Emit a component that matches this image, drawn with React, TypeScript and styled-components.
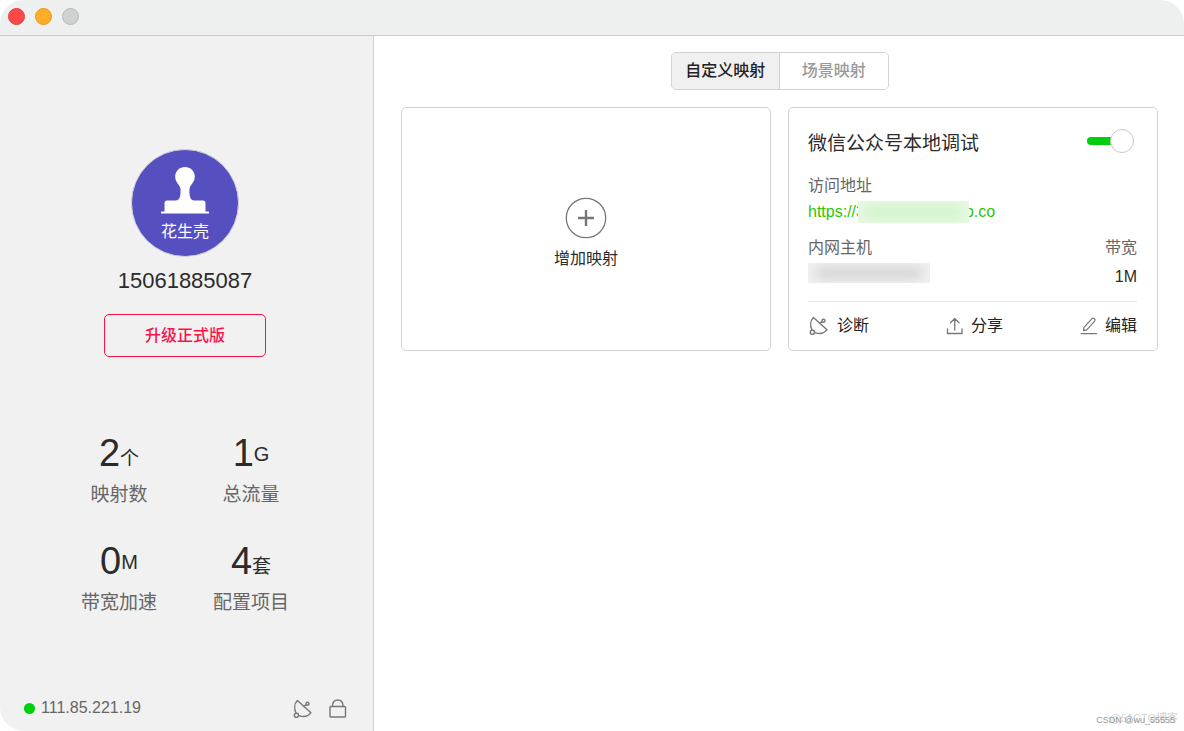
import React from 'react';
import styled, { createGlobalStyle } from 'styled-components';

const Global = createGlobalStyle`
  *, *::before, *::after { box-sizing: border-box; }
  body {
    margin: 0;
    background: #fff;
    color: #2b2b2b;
    font-family: "Liberation Sans", "Noto Sans CJK SC", sans-serif;
    font-size: 16px;
    line-height: 24px;
  }
  button { font: inherit; color: inherit; background: none; border: 0; padding: 0; cursor: pointer; }
  h1, h2, p, dl, dt, dd { margin: 0; font-weight: 400; }
  svg { display: block; }
`;

const Window = styled.div`
  position: relative;
  display: flex;
  flex-direction: column;
  min-height: 100vh;
  border-radius: 24px;
  overflow: hidden;
`;

const TitleBar = styled.header`
  display: flex;
  align-items: center;
  gap: 10px;
  height: 36px;
  padding: 0 8px 3px;
  background: #edf0ef;
  border-bottom: 1px solid #c9cccb;
`;

const Light = styled.button<{ $fill: string; $edge: string }>`
  width: 17px;
  height: 17px;
  border-radius: 50%;
  background: ${p => p.$fill};
  border: 1px solid ${p => p.$edge};
`;

const Body = styled.div`
  flex: 1;
  display: flex;
`;

const Sidebar = styled.aside`
  flex: 0 0 374px;
  display: flex;
  flex-direction: column;
  align-items: center;
  padding: 113px 3px 0 0;
  background: #f1f1f1;
  border-right: 1px solid #cfcfcf;
`;

const Avatar = styled.div`
  display: flex;
  flex-direction: column;
  align-items: center;
  width: 108px;
  height: 108px;
  padding-top: 17px;
  border: 1px solid #d3d3d8;
  border-radius: 50%;
  background: #554fc0;
  color: #fff;
  line-height: 24px;
  gap: 6px;
`;

const Phone = styled.h1`
  margin-top: 12px;
  font-size: 22px;
  line-height: 24px;
`;

const Upgrade = styled.button`
  width: 162px;
  height: 43px;
  margin-top: 21px;
  border: 1px solid #fa1148;
  border-radius: 5px;
  color: #fa1148;
  font-weight: 500;
`;

const Stats = styled.dl`
  display: grid;
  grid-template-columns: 132px 132px;
  row-gap: 32px;
  margin-top: 76px;
`;

const Stat = styled.div`
  display: flex;
  flex-direction: column-reverse;
  gap: 8px;
  text-align: center;
`;

const StatLabel = styled.dt`
  font-size: 19px;
  line-height: 28px;
  color: #666;
`;

const StatValue = styled.dd`
  display: flex;
  justify-content: center;
  align-items: center;
  font-size: 38px;
  line-height: 40px;
`;

const Unit = styled.span<{ $latin?: boolean }>`
  font-size: ${p => (p.$latin ? 20 : 19)}px;
  line-height: 24px;
  padding-top: ${p => (p.$latin ? 2 : 12)}px;
`;

const Status = styled.footer`
  display: flex;
  align-items: center;
  align-self: stretch;
  margin-top: auto;
  padding: 0 21px 11px 24px;
  color: #666;
`;

const Dot = styled.span`
  width: 11px;
  height: 11px;
  margin-right: 6px;
  border-radius: 50%;
  background: #00cf0c;
`;

const IconButton = styled.button`
  margin-left: 13px;
  padding-top: 2px;
  color: #777;
  &:first-of-type { margin-left: auto; }
`;

const Main = styled.main`
  flex: 1;
  min-width: 0;
  padding: 16px 26px 24px 27px;
`;

const Tabs = styled.div`
  display: flex;
  width: 218px;
  height: 38px;
  margin: 0 auto 17px;
  border: 1px solid #d2d2d2;
  border-radius: 5px;
  overflow: hidden;
`;

const Tab = styled.button<{ $active?: boolean }>`
  flex: 1;
  color: ${p => (p.$active ? '#222' : '#999')};
  background: ${p => (p.$active ? '#f0f0f0' : '#fff')};
  font-weight: 500;
  & + & { border-left: 1px solid #d2d2d2; }
`;

const Cards = styled.div`
  display: grid;
  grid-template-columns: 1fr 1fr;
  gap: 17px;
`;

const Card = styled.section`
  display: flex;
  flex-direction: column;
  padding: 21px 20px 12px 19px;
  border: 1px solid #d2d2d2;
  border-radius: 5px;
`;

const AddCard = styled.button`
  display: flex;
  flex-direction: column;
  align-items: center;
  justify-content: center;
  gap: 8px;
  padding-top: 10px;
  border: 1px solid #d2d2d2;
  border-radius: 5px;
`;

const Row = styled.div<{ $top: number }>`
  display: flex;
  align-items: center;
  justify-content: space-between;
  min-height: 24px;
  margin-top: ${p => p.$top}px;
`;

const Hosts = styled.div`
  display: flex;
  align-items: flex-start;
  justify-content: space-between;
  margin-top: 12px;
`;

const Field = styled.div<{ $gap: number; $end?: boolean }>`
  display: flex;
  flex-direction: column;
  align-items: ${p => (p.$end ? 'flex-end' : 'flex-start')};
  gap: ${p => p.$gap}px;
`;

const Title = styled.h2`
  font-size: 19px;
  line-height: 26px;
`;

const Muted = styled.span`
  color: #666;
`;

const Switch = styled.input`
  appearance: none;
  display: flex;
  align-items: center;
  margin: 0 3px 6px 0;
  cursor: pointer;
  &::before {
    content: "";
    width: 30px;
    height: 8px;
    border-radius: 4px;
    background: #c4c4c4;
  }
  &::after {
    content: "";
    width: 24px;
    height: 24px;
    margin-left: -7px;
    border: 1px solid #c8c8c8;
    border-radius: 50%;
    background: #fff;
  }
  &:checked::before { background: #00cf0c; }
`;

const Address = styled.a`
  display: flex;
  align-items: center;
  color: #28c800;
  text-decoration: none;
`;

const Masked = styled.span<{ $width: number; $tint: string; $ink: string }>`
  display: flex;
  align-items: center;
  width: ${p => p.$width}px;
  height: 20px;
  padding: 0 8px;
  background: ${p => p.$tint};
  overflow: hidden;
  &::before {
    content: "";
    flex: 1;
    height: 10px;
    background: ${p => p.$ink};
    filter: blur(6px);
  }
`;

const MaskedDomain = styled(Masked)`
  position: relative;
  height: 22px;
  margin: 0 -4px 0 -7px;
`;

const Actions = styled.div`
  display: flex;
  justify-content: space-between;
  margin-top: 12px;
  padding-top: 12px;
  border-top: 1px solid #e6e6e6;
`;

const Action = styled.button`
  display: flex;
  align-items: center;
  gap: 7px;
  color: #222;
  svg { color: #777; }
`;

const Watermark = styled.div<{ $right: number; $bottom: number; $size: number; $color: string }>`
  position: absolute;
  right: ${p => p.$right}px;
  bottom: ${p => p.$bottom}px;
  font-size: ${p => p.$size}px;
  line-height: 14px;
  color: ${p => p.$color};
  pointer-events: none;
`;

const line = { fill: 'none', stroke: 'currentColor', strokeLinecap: 'round', strokeLinejoin: 'round' } as const;

const Dish = () => (
  <svg width="22" height="22" viewBox="0 0 22 22" {...line} strokeWidth="1.4" aria-hidden="true">
    <path d="M4 15C2 11 2.200 5.800 5.400 2.500L19 14.700C16.200 18.600 11.300 19.200 6.900 17.600" />
    <path d="M11.800 8.400 14.200 6.600" />
    <circle cx="15.500" cy="5.700" r="1.500" />
    <circle cx="4.400" cy="17.300" r="2.100" />
  </svg>
);

const Lock = () => (
  <svg width="22" height="22" viewBox="0 0 22 22" {...line} strokeWidth="1.4" aria-hidden="true">
    <rect x="3" y="8.500" width="15.500" height="10.500" rx=".8" />
    <path d="M5.300 8.500C5.500 4.500 7.600 2 10.750 2S16 4.500 16.200 8.500" />
  </svg>
);

const Share = () => (
  <svg width="18" height="22" viewBox="0 0 18 22" {...line} strokeWidth="1.300" aria-hidden="true">
    <path d="M1.500 14v4.500h14.500V14M8.750 15V3.500M4.500 7.700 8.750 3.500 13 7.700" />
  </svg>
);

const Pen = () => (
  <svg width="18" height="22" viewBox="0 0 18 22" {...line} strokeWidth="1.200" aria-hidden="true">
    <path d="M1.200 18.700H16.500M3.500 15.700 4 12.300 12 3.600Q13.300 2.600 14.500 3.700T14.700 6.100L6.700 14.800Z" />
  </svg>
);

const Plus = () => (
  <svg width="42" height="42" viewBox="0 0 42 42" fill="none" stroke="#777" aria-hidden="true">
    <circle cx="21" cy="21" r="19.700" strokeWidth="1.300" />
    <path d="M21 13v16M13 21h16" strokeWidth="2.400" />
  </svg>
);

const Stamp = () => (
  <svg width="50" height="47" viewBox="0 0 50 47" fill="#fff" aria-hidden="true">
    <path d="M25 0C30.500 0 34.800 4.200 34.800 9.400C34.800 16 30 17 29.500 22C29.300 27 29.500 33.500 34.500 33.500H43Q45.500 33.500 45.500 36V44.500H49V46.500H1V44.500H4.500V36Q4.500 33.500 7 33.500H15.500C20.500 33.500 20.700 27 20.500 22C20 17 15.200 16 15.200 9.400C15.200 4.200 19.500 0 25 0Z" />
  </svg>
);

const stats = [
  { value: '2', unit: '个', label: '映射数' },
  { value: '1', unit: 'G', label: '总流量', latin: true },
  { value: '0', unit: 'M', label: '带宽加速', latin: true },
  { value: '4', unit: '套', label: '配置项目' },
];

export default function App() {
  return (
    <>
      <Global />
      <Window>
        <TitleBar>
          <Light $fill="#fc4848" $edge="#e0403f" aria-label="关闭" />
          <Light $fill="#fdae27" $edge="#df9a25" aria-label="最小化" />
          <Light $fill="#cfd2d1" $edge="#b5b8b7" aria-label="缩放" />
        </TitleBar>
        <Body>
          <Sidebar>
            <Avatar>
              <Stamp />
              <span>花生壳</span>
            </Avatar>
            <Phone>15061885087</Phone>
            <Upgrade>升级正式版</Upgrade>
            <Stats>
              {stats.map(s => (
                <Stat key={s.label}>
                  <StatLabel>{s.label}</StatLabel>
                  <StatValue>
                    {s.value}
                    <Unit $latin={s.latin}>{s.unit}</Unit>
                  </StatValue>
                </Stat>
              ))}
            </Stats>
            <Status>
              <Dot />
              111.85.221.19
              <IconButton aria-label="诊断"><Dish /></IconButton>
              <IconButton aria-label="锁定"><Lock /></IconButton>
            </Status>
          </Sidebar>
          <Main>
            <Tabs role="tablist">
              <Tab role="tab" aria-selected="true" $active>自定义映射</Tab>
              <Tab role="tab" aria-selected="false">场景映射</Tab>
            </Tabs>
            <Cards>
              <AddCard>
                <Plus />
                增加映射
              </AddCard>
              <Card>
                <Row $top={0}>
                  <Title>微信公众号本地调试</Title>
                  <Switch type="checkbox" defaultChecked aria-label="启用映射" />
                </Row>
                <Row $top={15}><Muted>访问地址</Muted></Row>
                <Row $top={2}>
                  <Address href="#">
                    https://3<MaskedDomain $width={111} $tint="#e6f9e1" $ink="#cdf2c5" />o.co
                  </Address>
                </Row>
                <Hosts>
                  <Field $gap={3}>
                    <Muted>内网主机</Muted>
                    <Masked $width={122} $tint="#f1f1f1" $ink="#cfcfcf" />
                  </Field>
                  <Field $gap={5} $end>
                    <Muted>带宽</Muted>
                    <span>1M</span>
                  </Field>
                </Hosts>
                <Actions>
                  <Action><Dish />诊断</Action>
                  <Action><Share />分享</Action>
                  <Action><Pen />编辑</Action>
                </Actions>
              </Card>
            </Cards>
          </Main>
        </Body>
        <Watermark $right={6} $bottom={6} $size={11} $color="#d4d4d4">@51CTO博客</Watermark>
        <Watermark $right={9} $bottom={4} $size={9} $color="#999">CSDN @wu_55555</Watermark>
      </Window>
    </>
  );
}
